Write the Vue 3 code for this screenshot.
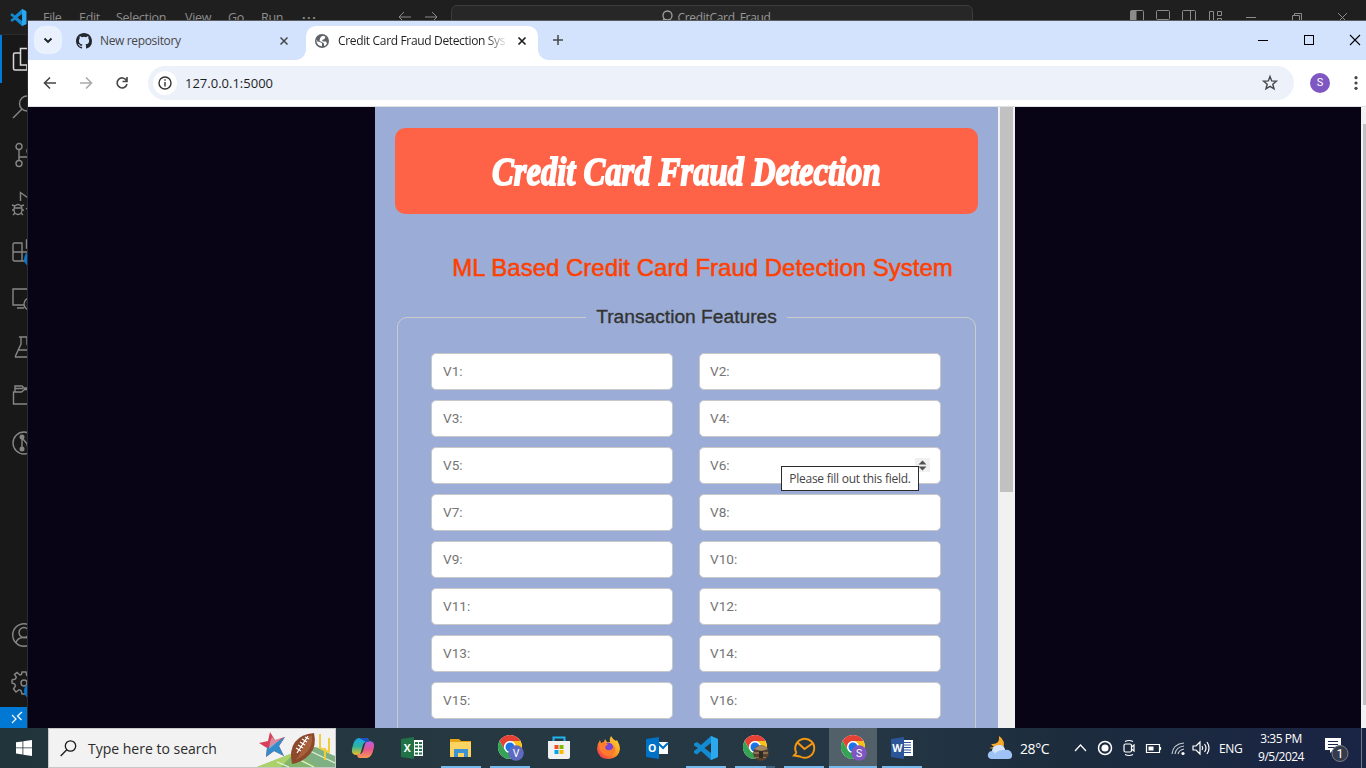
<script setup>
const menus = [
  { t: 'File', w: 36 }, { t: 'Edit', w: 37 }, { t: 'Selection', w: 69 }, { t: 'View', w: 43 },
  { t: 'Go', w: 33 }, { t: 'Run', w: 41 }, { t: '···', w: 20 },
]
const fields = Array.from({ length: 18 }, (_, i) => `V${i + 1}:`)
const apps = [
  { id: 'copilot' }, { id: 'excel' }, { id: 'explorer', run: true },
  { id: 'chrome', run: true, badge: 'V', color: '#5c6bc0' },
  { id: 'store' }, { id: 'firefox' }, { id: 'outlook' }, { id: 'code', run: true },
  { id: 'chrome', run: true, stacked: true, photo: true },
  { id: 'em', run: true }, { id: 'chrome', run: true, active: true, badge: 'S', color: '#7e57c2' },
  { id: 'word', run: true },
]
</script>

<template>
  <div class="desktop">
    <div class="editor">
      <div class="titlebar">
        <svg class="logo" width="17" height="17" viewBox="0 0 24 24">
          <path d="M17 0 7 9 3 6 1 7v2l4 3-4 3v2l2 1 4-3 10 9 6-3V3z" fill="#1389cf" />
          <path d="M17 0v24l6-3V3z" fill="#2aa9f2" /><path d="M17 7v10l-6.500-5z" fill="#1f1f1f" />
        </svg>
        <span v-for="m in menus" :key="m.t" class="menu" :class="{ more: m.t === '···' }" :style="{ width: m.w + 'px' }">{{ m.t }}</span>
        <svg class="hist" width="42" height="14" viewBox="0 0 42 14" fill="none" stroke="#8a8a8a"><path d="M13 7H1M6 2 1 7l5 5M27 7h12M34 2l5 5-5 5" /></svg>
        <div class="palette">
          <svg width="13" height="14" viewBox="0 0 13 14" fill="none" stroke="#a0a0a0" stroke-width="1.3"><circle cx="7.500" cy="5.500" r="4.500" /><path d="M4.500 8.500 1 13" /></svg>
          <span>CreditCard_Fraud</span>
        </div>
        <svg class="ctl" width="226" height="18" viewBox="0 0 226 18" fill="none" stroke="#8b8b8b">
          <rect x="1.500" y="2.500" width="13" height="11" rx="1" /><path d="M2 3h5v10H2z" fill="#8b8b8b" />
          <rect x="27.500" y="2.500" width="13" height="9" rx="1" />
          <rect x="53.500" y="2.500" width="13" height="11" rx="1" /><path d="M61.500 3v10" />
          <path d="M80.500 3.500h4v11h-4zM88.500 3.500h4v4h-4zM88.500 10.500h4v4h-4z" />
          <path d="M117 9.500h10M163.500 7.500h7v7h-7zM165.500 7.500v-2h7v7h-2M209 5l9 9M218 5l-9 9" />
        </svg>
      </div>
      <div class="activity">
        <div class="act on"><svg width="24" height="24" viewBox="0 0 24 24"><path d="M8 6H3Q1.500 6 1.500 7.500v14Q1.500 23 3 23h12v-5M8.500 1.500H17l5 5V18H8.500z" /></svg></div>
        <div class="act"><svg width="24" height="24" viewBox="0 0 24 24"><circle cx="15" cy="8.500" r="7.500" /><path d="M10 14 1 23" /></svg></div>
        <div class="act"><svg width="24" height="24" viewBox="0 0 24 24"><circle cx="7" cy="3.500" r="3" /><circle cx="7" cy="20.500" r="3" /><circle cx="18" cy="8" r="3" /><path d="M7 7v10M7 14h7q4 0 4-3" /></svg></div>
        <div class="act"><svg width="24" height="24" viewBox="0 0 24 24"><path d="M8.500 10V1.500L23 12l-9 6" /><ellipse cx="6" cy="18.500" rx="4" ry="5" /><path d="M2 17h8M0 14l3 1M0 19h2M1 24l2-2M12 14l-3 1M12 19h-2M11 24l-2-2" /></svg></div>
        <div class="act"><svg width="24" height="24" viewBox="0 0 24 24"><path d="M2.500 4H10v9h9v9H2.500Q1 22 1 20.500v-15Q1 4 2.500 4zM1 13h9v9M14.500 1H23v8h-8.500z" /></svg><i class="dot" /></div>
        <div class="act"><svg width="24" height="24" viewBox="0 0 24 24"><path d="M12 18H1V2h21v7M5 21h7" /><circle cx="18" cy="17" r="6" /><path d="m15 15 2 2-2 2" /></svg></div>
        <div class="act"><svg width="24" height="24" viewBox="0 0 24 24"><path d="M7 2h10M9 2v7L3.500 21v1h17v-1L15 9V2M6.500 15h11" /></svg></div>
        <div class="act"><svg width="24" height="24" viewBox="0 0 24 24"><path d="M1.500 21V9h8l3-2.500H22V21zM3 9V3h7l2 2h10v2M3 5.500h8" /></svg></div>
        <div class="act"><svg width="24" height="24" viewBox="0 0 24 24"><circle cx="12" cy="12" r="11" /><path d="M10 6v12M10 7l7 8" /><g fill="#868686"><circle cx="10" cy="6" r="1.800" /><circle cx="10" cy="18" r="1.800" /><circle cx="17" cy="14" r="1.800" /></g></svg></div>
        <div class="grow" />
        <div class="act"><svg width="24" height="24" viewBox="0 0 24 24"><circle cx="12" cy="12" r="11.300" /><circle cx="12" cy="9.500" r="5" /><path d="M4 20q1-5.500 8-5.500t8 5.500" /></svg></div>
        <div class="act"><svg width="24" height="24" viewBox="0 0 24 24"><path d="M10 1h4l.7 3.500 2 .8L20 3l2 3-2.500 3 .8 2 3.200 1v3l-3 1-1 2 2 3-3 2-3-2-2 .8L13 23h-3l-1-3.500-2-.8L4 21l-2.500-3 2-3-.8-2L0 12V9l3.500-1 .8-2L2.500 3.500 5 1.500 8 4l1.500-.6z" /><circle cx="12" cy="12" r="3" /></svg><i class="dot" /></div>
      </div>
      <div class="status"><svg width="14" height="14" viewBox="0 0 14 14" fill="none" stroke="#fff" stroke-width="1.200"><path d="m1 4 4 4-4 4M11 1 6.500 5l4 4" /></svg></div>
    </div>

    <div class="chrome">
      <div class="tabs">
        <div class="tabsearch"><svg width="10" height="7" viewBox="0 0 10 7" fill="none" stroke="#1f1f1f" stroke-width="1.900"><path d="m1.500 1.500 3.500 3.500 3.500-3.500" /></svg></div>
        <div class="tab idle">
          <svg width="16" height="16" viewBox="0 0 16 16"><path fill="#24292f" d="M8 0C3.580 0 0 3.580 0 8c0 3.540 2.290 6.530 5.470 7.590.4.070.55-.17.55-.38v-1.490c-2.010.37-2.530-.49-2.690-.94-.09-.23-.48-.94-.82-1.130-.28-.15-.68-.52-.01-.53.63-.01 1.080.58 1.230.82.72 1.210 1.870.87 2.330.66.070-.52.28-.87.510-1.070-1.780-.2-3.640-.89-3.640-3.950 0-.87.310-1.590.82-2.150-.08-.2-.36-1.020.08-2.120 0 0 .67-.21 2.200.82a7.500 7.500 0 0 1 4 0c1.530-1.040 2.200-.82 2.200-.82.44 1.100.16 1.920.08 2.120.51.56.82 1.270.82 2.150 0 3.070-1.870 3.750-3.650 3.950.29.25.54.73.54 1.480v2.190c0 .21.150.46.55.38A8 8 0 0 0 16 8c0-4.420-3.580-8-8-8z" /></svg>
          <span>New repository</span>
          <svg width="8" height="8" viewBox="0 0 8 8" stroke="#444746" stroke-width="1.500"><path d="m.5.5 7 7M7.500.5l-7 7" /></svg>
        </div>
        <div class="tab live">
          <svg width="14" height="14" viewBox="0 0 14 14"><circle cx="7" cy="7" r="7" fill="#5f6368" /><path d="M1.500 5.500Q2 8 4.500 8L7 9v3.300Q2 12 1.500 7zM5 4.500q.5-2 3-2.700l2.500 1-1 2.200-2.500 1 1 1.500h3l1 2-2 2.500-1-.5V9.500L7 8 4.500 7z" fill="#fff" /></svg>
          <span class="fade">Credit Card Fraud Detection System</span>
          <svg width="8" height="8" viewBox="0 0 8 8" stroke="#1f1f1f" stroke-width="1.700"><path d="m.5.5 7 7M7.500.5l-7 7" /></svg>
        </div>
        <svg class="plus" width="10" height="10" viewBox="0 0 10 10" stroke="#444746" stroke-width="1.500"><path d="M5 0v10M0 5h10" /></svg>
        <svg class="wctl" width="104" height="12" viewBox="0 0 104 12" fill="none" stroke="#000"><path d="M1 6.500h10" /><rect x="47.500" y="1.500" width="9" height="9" /><path d="m93 1 10 10M103 1 93 11" stroke-width="1.100" /></svg>
      </div>
      <div class="toolbar">
        <svg class="nav" width="88" height="16" viewBox="0 0 88 16" fill="none" stroke="#444746" stroke-width="1.600">
          <path d="M14 8H3M8 2.500 2.500 8 8 13.500" /><path d="M38 8h11M44 2.500 49.500 8 44 13.500" stroke="#aaaaaa" />
          <path d="M84.500 5.500A5 5 0 1 0 85 9M85 2v4.500H80.500" />
        </svg>
        <div class="omni">
          <div class="info"><svg width="14" height="14" viewBox="0 0 14 14" fill="none" stroke="#333" stroke-width="1.400"><circle cx="7" cy="7" r="6" /><path d="M7 6v4.500M7 3.300v1.500" /></svg></div>
          <span class="url">127.0.0.1:5000</span>
          <svg width="16" height="16" viewBox="0 0 16 16" fill="none" stroke="#444746" stroke-width="1.400"><path d="m8 1.500 1.700 4.400 4.700.3-3.600 3 1.200 4.600L8 11.300l-4 2.500 1.200-4.600-3.600-3 4.700-.3z" /></svg>
        </div>
        <div class="avatar">S</div>
        <svg class="dots" width="4" height="14" viewBox="0 0 4 14" fill="#444746"><circle cx="2" cy="1.700" r="1.600" /><circle cx="2" cy="7" r="1.600" /><circle cx="2" cy="12.300" r="1.600" /></svg>
      </div>
      <div class="page">
        <div class="panel">
          <div class="banner"><h1>Credit Card Fraud Detection</h1></div>
          <h2>ML Based Credit Card Fraud Detection System</h2>
          <fieldset>
            <legend>Transaction Features</legend>
            <div class="grid">
              <div v-for="f in fields" :key="f" class="field">
                <span>{{ f }}</span>
                <div v-if="f === 'V6:'" class="spin"><svg width="9" height="11" viewBox="0 0 9 11" fill="#505050"><path d="M.5 4.500 4.500.5l4 4zM.5 6.500h8l-4 4z" /></svg></div>
                <div v-if="f === 'V6:'" class="tip">Please fill out this field.</div>
              </div>
            </div>
          </fieldset>
        </div>
        <div class="innerbar"><div /></div>
        <div class="grow" />
        <div class="outerbar"><div /></div>
      </div>
    </div>

    <div class="taskbar">
      <div class="start"><svg width="16" height="16" viewBox="0 0 16 16" fill="#fff"><path d="M0 2.300 6.500 1.400v6.100H0zM7.300 1.300 16 0v7.500H7.300zM0 8.300h6.500v6.200L0 13.600zM7.300 8.300H16V16l-8.700-1.300z" /></svg></div>
      <div class="search">
        <svg width="17" height="17" viewBox="0 0 17 17" fill="none" stroke="#1a1a1a" stroke-width="1.300"><circle cx="10.500" cy="6" r="5.200" /><path d="M6.800 9.800.7 16" /></svg>
        <span>Type here to search</span>
        <svg class="scene" width="78" height="38" viewBox="0 0 78 38">
          <path d="M0 38 52 18q6-1 12 2l14 8v10z" fill="#83b66b" /><path d="M0 38 38 23 24 38z" fill="#acd16a" /><path d="M56 18 78 27v11H62L44 27z" fill="#7fb084" />
          <path d="m20 33 12 5M37 28l20 10M51 21l27 13" stroke="#e5f2d7" stroke-width="1.300" />
          <path d="m13 3 5 8 10-3-6 9 5 10-10-5-8 6 1-9-8-5 9-2z" fill="#d5405a" /><path d="m28 8-6 9 5 10-10-5-8 6 1-9z" fill="#338bc9" /><path d="m15 8 3 3 7-2-13 11 1-7z" fill="#e0bccb" opacity=".6" />
          <path d="M57 4q3 13-4 21T35 35q-3-14 3-22T57 4z" fill="#8d492b" /><path d="M55 6q1 11-5 17T38 31q4-2 8-13T55 6z" fill="#bd774b" opacity=".55" />
          <path d="m40 24 11-17M39 19l5 3M41 16l5 3M43 13l5 3M45 10l5 3M48 8l4 2" stroke="#fff" stroke-width="1.300" />
          <path d="M63 5v14l9 4V9M68 19v12" fill="none" stroke="#f0cc3f" stroke-width="2" />
        </svg>
      </div>
      <div class="apps">
        <div v-for="(a, i) in apps" :key="i" class="app" :class="{ run: a.run, active: a.active, stacked: a.stacked }">
          <svg v-if="a.id === 'copilot'" width="24" height="24" viewBox="0 0 24 24"><defs><linearGradient id="cpa" x2="0" y2="1"><stop stop-color="#19a8e8" /><stop offset=".5" stop-color="#2fb4a0" /><stop offset="1" stop-color="#f2c21b" /></linearGradient><linearGradient id="cpb" x2="0" y2="1"><stop stop-color="#b45de8" /><stop offset=".5" stop-color="#e6578d" /><stop offset="1" stop-color="#fb9a50" /></linearGradient></defs><path d="M8 2h7q3 0 3 4h-3q-2 0-3 3l-2 7q-1 3-4 3-6 0-5-6 2-11 7-11z" fill="url(#cpa)" /><path d="M16 22H9q-3 0-3-4h3q2 0 3-3l2-7q1-3 4-3 6 0 5 6-2 11-7 11z" fill="url(#cpb)" /><path d="M8 2h7q3 0 3 4h-3z" fill="#1d54c5" /></svg>
          <svg v-else-if="['excel', 'word', 'outlook'].includes(a.id)" width="24" height="24" viewBox="0 0 24 24">
            <path v-if="a.id !== 'outlook'" d="M12 4h11v16H12z" fill="#fff" />
            <path v-if="a.id === 'excel'" d="M15 6h3v2h-3zM19 6h3v2h-3zM15 9.500h3v2h-3zM19 9.500h3v2h-3zM15 13h3v2h-3zM19 13h3v2h-3zM15 16.500h3v2h-3zM19 16.500h3v2h-3z" fill="#217346" />
            <path v-if="a.id === 'word'" d="M14 6.500h7M14 9h7M14 11.500h7M14 14h7M14 16.500h7" stroke="#2b579a" />
            <path v-if="a.id === 'outlook'" d="M12 6h11v12H12z" fill="#fff" />
            <path v-if="a.id === 'outlook'" d="m13 7 5 5 5-5" fill="none" stroke="#0072c6" stroke-width="2" />
            <path d="m1 3 13-2v22L1 21z" :fill="a.id === 'excel' ? '#217346' : a.id === 'word' ? '#2b579a' : '#0072c6'" />
            <text x="7.300" y="16" text-anchor="middle" class="letter">{{ a.id === 'excel' ? 'X' : a.id === 'word' ? 'W' : 'O' }}</text>
          </svg>
          <svg v-else-if="a.id === 'explorer'" width="24" height="24" viewBox="0 0 24 24"><path d="M1 3h9l2 2h10v15H1z" fill="#e8a317" /><path d="M1 6h21v15H1z" fill="#fcd462" /><path d="M5 21v-8h14v8h-4v-4H9v4z" fill="#3f93d2" /></svg>
          <svg v-else-if="a.id === 'chrome'" class="cr" width="26" height="26" viewBox="0 0 26 26">
            <circle cx="12" cy="12" r="12" fill="#fff" /><path d="M1.600 6A12 12 0 0 1 22.400 6H12a6 6 0 0 0-5.200 9z" fill="#e64234" /><path d="M22.400 6A12 12 0 0 1 12 24l5.200-9A6 6 0 0 0 12 6z" fill="#fbc116" /><path d="M12 24A12 12 0 0 1 1.600 6l5.200 9a6 6 0 0 0 10.400 0z" fill="#34a353" /><circle cx="12" cy="12" r="5.700" fill="#fff" /><circle cx="12" cy="12" r="4.500" fill="#1a73e8" />
            <template v-if="a.badge"><circle cx="18" cy="18" r="7.800" :fill="a.color" /><text x="18" y="21.500" text-anchor="middle" class="badge">{{ a.badge }}</text></template>
            <template v-if="a.photo"><circle cx="18" cy="18" r="7.800" fill="#56422f" /><path d="M11 14q7-7 14 0l-7 2z" fill="#a38a65" /><path d="M11 17h14v2H11zM12 22h11v1H12z" fill="#8d7151" /><path d="M16 16h4v7h-4z" fill="#2f2a25" /></template>
          </svg>
          <svg v-else-if="a.id === 'store'" width="24" height="24" viewBox="0 0 24 24"><path d="M6.500 6V1.500h11V6" fill="none" stroke="#1fb4ec" stroke-width="2" /><path d="M1 5h22v16q0 2-2 2H3q-2 0-2-2z" fill="#f1f1f1" /><path d="M7.500 9h4v4h-4z" fill="#f25022" /><path d="M12.500 9h4v4h-4z" fill="#7fba00" /><path d="M7.500 14h4v4h-4z" fill="#00a4ef" /><path d="M12.500 14h4v4h-4z" fill="#ffb900" /></svg>
          <svg v-else-if="a.id === 'firefox'" width="24" height="24" viewBox="0 0 24 24"><defs><linearGradient id="ff" x1="1" x2="0" y2="1"><stop stop-color="#ffe23a" /><stop offset=".5" stop-color="#ff9323" /><stop offset="1" stop-color="#f22557" /></linearGradient></defs><path d="M15 0q2 4 5 5l1-1q3 5 3 9-1 9-11 10Q2 23 1 13q0-5 3-9l1 3 3-1 1-3 2 3h3q-1-3 1-6z" fill="url(#ff)" /><circle cx="12" cy="12" r="5.500" fill="#7547d8" /><path d="M3 8q5-3 9 0l-3 3q1 4 5 3 4-1 3-5 4 4 1 8-4 4-9 2-6-3-6-11z" fill="#ff7b2e" /></svg>
          <svg v-else-if="a.id === 'code'" width="24" height="24" viewBox="0 0 24 24"><path d="M17 0 7 9 3 6 0 7.500v2L4 12l-4 3v2l3 1.500L7 15l10 9 7-3V3z" fill="#148bd0" /><path d="M17 0v24l7-3V3z" fill="#2ca8ef" /><path d="M17 7v10l-6.500-5z" fill="#25363f" /></svg>
          <svg v-else width="24" height="24" viewBox="0 0 24 24" fill="none" stroke="#f6970d" stroke-width="2"><path d="M4.500 17A9.500 9.500 0 1 1 8 20.500L2 19.500l2.500-2.500M5.500 6.500l7 6.500L21 7" /></svg>
        </div>
      </div>
      <div class="grow" />
      <div class="tray">
        <svg class="weather" width="26" height="24" viewBox="0 0 26 24"><path d="M12 0q7 4 4 14L2 12l5-1-3-3q9 1 8-8z" fill="#f8a928" /><path d="M4 23q-4-1-3-5 1-3 4-3 1-6 7-6 5 0 6 5 5-1 7 4 1 5-4 5z" fill="#9fc3f4" /><path d="M5 15q1-6 7-6 5 0 6 5-8 0-10 4-1-3-3-3z" fill="#d6e5fb" /></svg>
        <span class="temp">28°C</span>
        <svg class="glyphs" width="138" height="20" viewBox="0 0 138 20" fill="none" stroke="#fff" stroke-width="1.200">
          <path d="m1 13 5.500-6 5.500 6" /><circle cx="31" cy="10" r="6.500" stroke-width="1.500" /><circle cx="31" cy="10" r="3" fill="#fff" />
          <rect x="50" y="6" width="7.500" height="8" rx="1.500" /><path d="m57.500 9 2.500-2v6l-2.500-2M51 3.500q4-2 8 0M51 16.500q4 2 8 0" />
          <path d="M72.500 6.500h13v8h-13zM86.500 9v3" /><path d="M74.500 8.500h5v4h-5z" fill="#fff" stroke="none" />
          <path d="M98 16q1-10 12-11M101 16q1-7 9-8M104 16q1-4 6-5" stroke="#c3c9d0" /><circle cx="109" cy="15.500" r="1.600" fill="#fff" stroke="none" />
          <path d="M119 8h3l4-4v12l-4-4h-3zM128 8q1.500 2 0 4M130.500 6q3 4 0 8M133 4q4 6 0 12" />
        </svg>
        <span class="lang">ENG</span>
        <div class="clock"><span>3:35 PM</span><span>9/5/2024</span></div>
        <svg class="note" width="26" height="26" viewBox="0 0 26 26"><path d="M1 1h16v12H9l-3 3v-3H1z" fill="#fff" /><path d="M4 4.500h10M4 7.500h10M4 10.500h7" stroke="#1b2944" /><circle cx="16" cy="16.500" r="8" fill="#353b49" stroke="#777d88" /><text x="16" y="20.800" text-anchor="middle" class="badge count">1</text></svg>
        <i class="edge" />
      </div>
    </div>
  </div>
</template>

<style>
html, body { margin: 0; overflow: hidden; }
</style>

<style scoped>
* { box-sizing: border-box; }
svg { display: block; flex: none; overflow: visible; }
.grow { flex: 1; }
.desktop { position: relative; width: 1366px; height: 768px; overflow: hidden; display: flex; flex-direction: column; font-family: "Open Sans", "Noto Sans", sans-serif; background: #181818; }
.editor { height: 728px; display: flex; flex-direction: column; }
.titlebar { height: 35px; background: #1f1f1f; border-bottom: 1px solid #2b2b2b; display: flex; align-items: center; flex: none; }
.logo { margin: 0 16px 0 10px; }
.menu { font-size: 12.5px; letter-spacing: -.3px; color: #8e8e8e; white-space: nowrap; flex: none; }
.more { font-weight: 700; letter-spacing: 1.5px; }
.hist { margin-left: 76px; }
.palette { margin-left: 11px; width: 522px; height: 24px; border: 1px solid #3c3c3c; border-radius: 6px; background: #272727; display: flex; justify-content: center; align-items: center; gap: 4px; font-size: 12px; letter-spacing: -.3px; color: #999; flex: none; padding-left: 7px; }
.ctl { margin-left: 156px; }
.activity { width: 48px; flex: 1; display: flex; flex-direction: column; background: #181818; }
.act { position: relative; height: 48px; display: flex; align-items: center; justify-content: center; }
.act svg { fill: none; stroke: #868686; stroke-width: 1.4; }
.act.on svg { stroke: #d7d7d7; stroke-width: 1.5; }
.act.on { box-shadow: inset 2px 0 #0078d4; }
.dot { position: absolute; left: 24px; top: 24px; width: 16px; height: 16px; border-radius: 8px; background: #0078d4; }
.status { width: 28px; height: 21px; background: #0078d4; display: flex; align-items: center; padding-left: 11px; }
.chrome { position: absolute; left: 27px; top: 20px; width: 1339px; height: 708px; border-top: 1px solid #5a5c60; border-left: 1px solid #2c2c2e; display: flex; flex-direction: column; background: #fff; }
.tabs { height: 39px; background: #d3e3fd; display: flex; padding: 5px 5px 0 6px; align-items: flex-start; flex: none; }
.tabsearch { width: 28px; height: 28px; border-radius: 10px; background: #e9f1fe; display: flex; align-items: center; justify-content: center; }
.tab { height: 34px; display: flex; align-items: center; font-size: 12px; padding-bottom: 5px; }
.idle { width: 244px; padding-left: 14px; color: #474747; }
.idle span { margin-left: 8px; width: 180px; letter-spacing: -.35px; }
.live { position: relative; width: 232px; background: #fff; border-radius: 10px 10px 0 0; padding-left: 9px; color: #1f1f1f; }
.live::before, .live::after { content: ""; position: absolute; bottom: 0; width: 10px; height: 10px; }
.live::before { left: -10px; background: radial-gradient(circle at 0 0, transparent 9.5px, #fff 10px); }
.live::after { right: -10px; background: radial-gradient(circle at 100% 0, transparent 9.5px, #fff 10px); }
.fade { margin: 0 13px 0 9px; width: 167px; overflow: hidden; white-space: nowrap; letter-spacing: -.34px; mask-image: linear-gradient(90deg, #000 148px, transparent 170px); }
.plus { margin: 9px 0 0 15px; }
.wctl { margin: 8px 0 0 auto; }
.toolbar { height: 46px; display: flex; align-items: center; flex: none; }
.nav { margin-left: 14px; }
.omni { margin-left: 18px; width: 1146px; height: 34px; border-radius: 17px; background: #ecf1fa; display: flex; align-items: center; padding: 0 16px 0 5px; }
.info { width: 24px; height: 24px; border-radius: 12px; background: #fff; display: flex; align-items: center; justify-content: center; margin-right: 8px; }
.url { flex: 1; font-size: 13px; color: #1f1f1f; }
.avatar { margin-left: 16px; width: 20px; height: 20px; border-radius: 10px; background: #7e57c2; color: #fff; font: 11px/20px Roboto, sans-serif; text-align: center; }
.dots { margin-left: 24px; }
.page { flex: 1; min-height: 0; border-top: 1px solid #dfe0e0; background: #080416; display: flex; padding-left: 347px; overflow: hidden; }
.panel { width: 623px; height: 800px; background: #9badd6; padding: 21px 20px 0; font-family: "Liberation Sans", Arial, sans-serif; flex: none; }
.banner { height: 86px; border-radius: 10px; background: #ff6347; display: flex; align-items: center; justify-content: center; }
h1 { margin: 0; font: italic bold 41px/60px "Liberation Serif", serif; color: #fff; white-space: nowrap; -webkit-text-stroke: 1.8px #fff; transform: scaleX(.795); }
h2 { margin: 39px 0 0; padding-left: 32px; text-align: center; font-size: 24px; line-height: 30px; font-weight: 400; color: #ff4000; white-space: nowrap; -webkit-text-stroke: .4px #ff4000; text-shadow: 0 0 1px #b98290; }
fieldset { margin: 23px 2px 0; padding: 25px 33px 0; height: 600px; border: 1px solid #ccc; border-radius: 10px; min-width: 0; }
legend { margin: 0 auto; padding: 0 10px; font-size: 19.2px; line-height: 22px; color: #333; -webkit-text-stroke: .35px #333; }
.grid { display: grid; grid-template-columns: 242px 242px; column-gap: 26px; row-gap: 10px; }
.field { position: relative; height: 37px; border: 1px solid #c8c8c8; border-radius: 5px; background: #fff; padding: 0 10px 1px; display: flex; align-items: center; justify-content: space-between; font: 13.6px Roboto, sans-serif; color: #757575; }
.field:nth-child(odd) { padding-left: 11px; }
.spin { width: 15px; height: 14px; background: #f0f0f0; display: flex; align-items: center; justify-content: center; }
.tip { position: absolute; left: 81px; top: 18px; width: 138px; height: 25px; border: 1px solid #2b2b2b; background: #fff; color: #444; font: 12px/24px "Open Sans", sans-serif; letter-spacing: -.25px; text-align: center; white-space: nowrap; z-index: 2; }
.innerbar { width: 17px; background: #f1f1f1; padding: 0 2px; flex: none; }
.innerbar div { height: 385px; background: #c1c1c1; }
.outerbar { width: 5px; background: #f1f1f1; padding: 17px 0 0 2px; flex: none; }
.outerbar div { height: 581px; background: #c1c1c1; }
.taskbar { height: 40px; display: flex; background: linear-gradient(90deg, #22343b, #263942 40%, #243644 65%, #1c2c3d 78%, #1a2445); }
.start { width: 48px; display: flex; align-items: center; justify-content: center; }
.search { width: 288px; background: #f2f2f2; border: 1px solid #c7c7c7; display: flex; align-items: center; flex: none; padding-left: 11px; font-size: 14px; color: #2b2b2b; }
.search span { margin-left: 11px; width: 170px; white-space: nowrap; }
.scene { align-self: flex-start; }
.apps { display: flex; gap: 1px; margin-left: 3px; }
.app { position: relative; width: 48px; display: flex; justify-content: center; align-items: center; }
.cr { margin-left: 2px; }
.run::after { content: ""; position: absolute; left: 4px; bottom: 0; width: 40px; height: 2px; background: #76b9ed; }
.active { background: #526069; }
.active::after { left: 0; width: 48px; }
.stacked::after { background: linear-gradient(90deg, #76b9ed 31px, #3f6480 31px); }
.letter { font: bold 10.5px "Open Sans", sans-serif; fill: #fff; }
.badge { font: 10.5px Roboto, sans-serif; fill: #fff; }
.count { font-size: 12.5px; }
.tray { display: flex; align-items: center; color: #fff; width: 379px; flex: none; }
.temp { margin-left: 7px; width: 54px; font-size: 14px; letter-spacing: -.4px; }
.lang { margin-left: 7px; width: 38px; font-size: 12px; letter-spacing: -.3px; }
.clock { width: 48px; display: flex; flex-direction: column; align-items: center; font-size: 12px; line-height: 18px; letter-spacing: -.5px; white-space: nowrap; }
.note { margin: 3px 0 0 19px; }
.edge { margin-left: auto; margin-right: 4px; width: 1px; height: 40px; background: #6e7788; }
</style>
